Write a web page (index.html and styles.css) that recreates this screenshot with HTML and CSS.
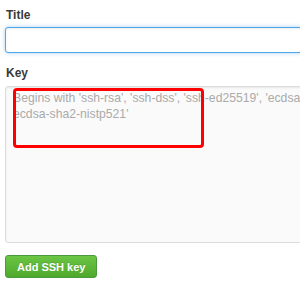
FILE: index.html
```html
<!DOCTYPE html>
<html>
<head>
<meta charset="utf-8">
<link rel="stylesheet" href="styles.css">
</head>
<body>
<form class="form">
  <label class="label" for="title">Title</label>
  <input class="input" id="title" type="text">
  <label class="label label-key" for="key">Key</label>
  <textarea class="textarea" id="key" placeholder="Begins with 'ssh-rsa', 'ssh-dss', 'ssh-ed25519', 'ecdsa-sha2-nistp256', 'ecdsa-sha2-nistp384', or '&#10;ecdsa-sha2-nistp521'"></textarea>
  <button class="btn" type="button">Add SSH key</button>
  <div class="highlight"></div>
</form>
</body>
</html>
```
FILE: styles.css
```css
html, body {
  margin: 0;
  padding: 0;
  background: #fff;
  overflow: hidden;
  width: 300px;
  height: 287px;
}
.form {
  position: relative;
  display: flex;
  flex-direction: column;
  align-items: flex-start;
  padding: 5px 0 0 5px;
  font-family: "Liberation Sans", Arial, sans-serif;
  width: 1000px;
}
.label {
  font-size: 12px;
  font-weight: bold;
  line-height: 20px;
  color: #3a3a3a;
  padding-left: 1px;
}
.input {
  margin-top: 2px;
  box-sizing: border-box;
  width: 900px;
  height: 26px;
  border: 1px solid #51a7e8;
  border-radius: 3px;
  outline: none;
  box-shadow: inset 0 1px 2px rgba(0,0,0,0.075), 0 0 4px rgba(81,167,232,0.5);
  background: #fff;
}
.label-key {
  margin-top: 10px;
}
.textarea {
  margin-top: 3px;
  box-sizing: border-box;
  width: 900px;
  height: 157px;
  border: 1px solid #ddd;
  border-radius: 3px;
  background: #fafafa;
  box-shadow: inset 0 1px 2px rgba(0,0,0,0.075);
  padding: 3px 7px;
  font-family: "Liberation Sans", Arial, sans-serif;
  font-size: 12.2px;
  line-height: 16px;
  resize: none;
  outline: none;
}
.textarea::placeholder {
  color: #aaa;
}
.btn {
  margin-top: 12px;
  height: 23px;
  padding: 0 11px;
  border: 1px solid #4a993e;
  border-radius: 3px;
  background: linear-gradient(#6cc644, #4ea82c);
  color: #fff;
  font-family: "Liberation Sans", Arial, sans-serif;
  font-size: 11px;
  font-weight: bold;
  text-shadow: 0 -1px 0 rgba(0,0,0,0.15);
}
.highlight {
  position: absolute;
  left: 13px;
  top: 88px;
  width: 191px;
  height: 60px;
  box-sizing: border-box;
  border: 3px solid #f00;
  border-radius: 4px;
}
```
